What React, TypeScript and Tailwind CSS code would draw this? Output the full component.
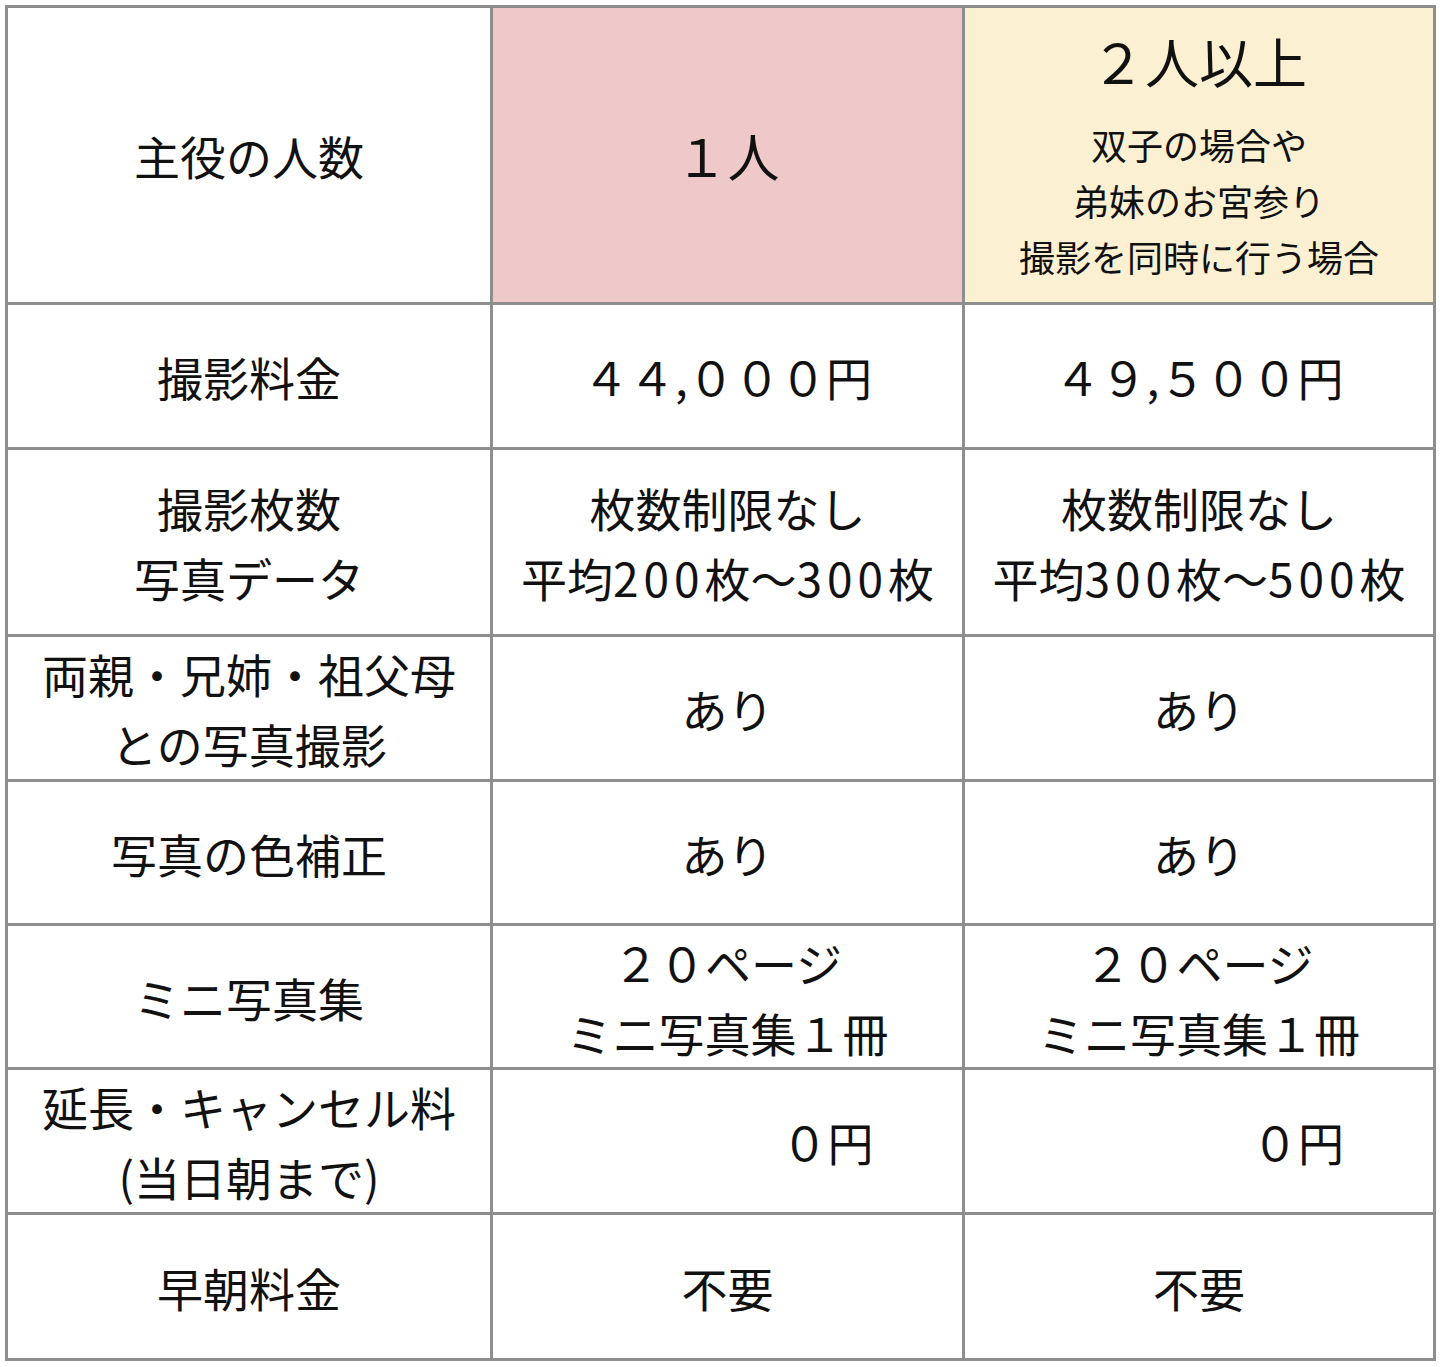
const font = { fontFamily: '"Noto Sans CJK JP", "Noto Sans", sans-serif' };

type Row = {
  label: React.ReactNode;
  one: React.ReactNode;
  two: React.ReactNode;
  h: string;
};

const Num = ({ children }: { children: React.ReactNode }) => (
  <span className="tracking-[5px]">{children}</span>
);

const rows: Row[] = [
  {
    label: "撮影料金",
    one: "４４,０００円",
    two: "４９,５００円",
    h: "h-[145px]",
  },
  {
    label: (
      <>
        撮影枚数
        <br />
        写真データ
      </>
    ),
    one: (
      <>
        枚数制限なし
        <br />
        平均<Num>200</Num>枚～<Num>300</Num>枚
      </>
    ),
    two: (
      <>
        枚数制限なし
        <br />
        平均<Num>300</Num>枚～<Num>500</Num>枚
      </>
    ),
    h: "h-[187px]",
  },
  {
    label: (
      <>
        両親・兄姉・祖父母
        <br />
        との写真撮影
      </>
    ),
    one: "あり",
    two: "あり",
    h: "h-[145px]",
  },
  {
    label: "写真の色補正",
    one: "あり",
    two: "あり",
    h: "h-[144px]",
  },
  {
    label: "ミニ写真集",
    one: (
      <>
        ２０ページ
        <br />
        ミニ写真集１冊
      </>
    ),
    two: (
      <>
        ２０ページ
        <br />
        ミニ写真集１冊
      </>
    ),
    h: "h-[144px]",
  },
  {
    label: (
      <>
        延長・キャンセル料
        <br />
        (当日朝まで)
      </>
    ),
    one: <span className="block pl-[200px]">０円</span>,
    two: <span className="block pl-[198px]">０円</span>,
    h: "h-[145px]",
  },
  {
    label: "早朝料金",
    one: "不要",
    two: "不要",
    h: "h-[146px]",
  },
];

export default function App() {
  return (
    <div className="min-h-[1367px] bg-white p-[5px] text-[#111]" style={font}>
      <table className="w-[1428px] table-fixed border-collapse border-[3px] border-[#8e8e8e]">
        <colgroup>
          <col className="w-[485px]" />
          <col className="w-[472px]" />
          <col className="w-[471px]" />
        </colgroup>
        <tbody>
          <tr className="h-[297px]">
            <td className="border-[3px] border-[#8e8e8e] text-center align-middle text-[46px] leading-[70px]">
              主役の人数
            </td>
            <td className="border-[3px] border-[#8e8e8e] bg-[#efc8c9] text-center align-middle text-[52px] leading-[70px]">
              １人
            </td>
            <td className="border-[3px] border-[#8e8e8e] bg-[#fcf0d3] text-center align-middle">
              <div className="text-[54px] leading-[70px]">２人以上</div>
              <div className="mt-[20px] text-[36px] leading-[56px]">
                双子の場合や
                <br />
                弟妹のお宮参り
                <br />
                撮影を同時に行う場合
              </div>
            </td>
          </tr>
          {rows.map((r, i) => (
            <tr key={i} className={r.h}>
              <td className="border-[3px] border-[#8e8e8e] text-center align-middle text-[46px] leading-[70px]">
                {r.label}
              </td>
              <td className="border-[3px] border-[#8e8e8e] text-center align-middle text-[46px] leading-[70px]">
                {r.one}
              </td>
              <td className="border-[3px] border-[#8e8e8e] text-center align-middle text-[46px] leading-[70px]">
                {r.two}
              </td>
            </tr>
          ))}
        </tbody>
      </table>
    </div>
  );
}
